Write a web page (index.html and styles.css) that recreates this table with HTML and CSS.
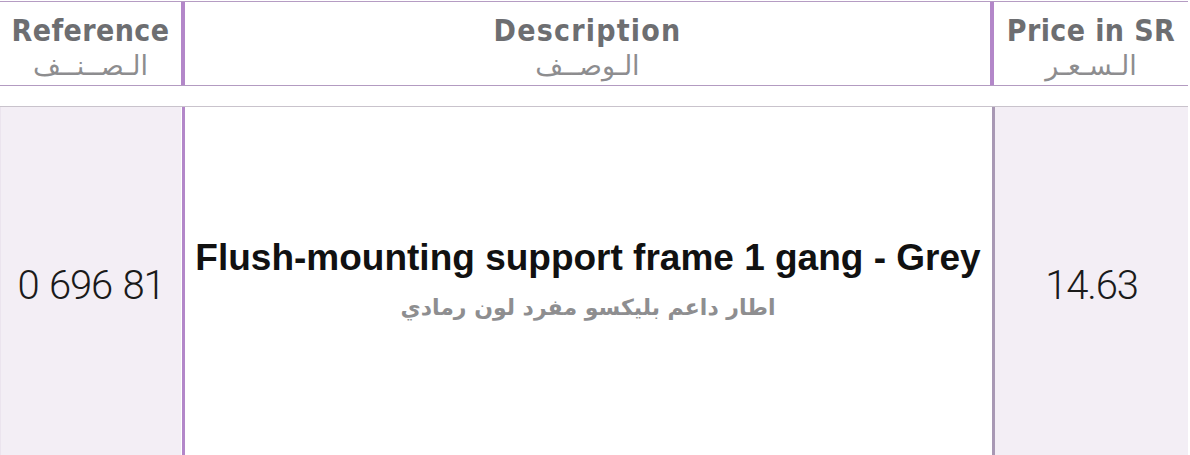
FILE: index.html
```html
<!DOCTYPE html>
<html lang="en">
<head>
<meta charset="utf-8">
<title>Price list</title>
<link rel="stylesheet" href="styles.css">
</head>
<body>
<div class="sheet">
  <div class="row head">
    <div class="cell c1">
      <div class="en">Reference</div>
      <div class="ar" dir="rtl">الـصــنــف</div>
    </div>
    <div class="cell c2">
      <div class="en wide">Description</div>
      <div class="ar" dir="rtl">الـوصــف</div>
    </div>
    <div class="cell c3">
      <div class="en">Price in SR</div>
      <div class="ar" dir="rtl">الـسـعـر</div>
    </div>
  </div>
  <div class="row body">
    <div class="cell c1 shade"><span class="num">0 696 81</span></div>
    <div class="cell c2">
      <div class="title">Flush-mounting support frame 1 gang - Grey</div>
      <div class="artitle" dir="rtl">اطار داعم بليكسو مفرد لون رمادي</div>
    </div>
    <div class="cell c3 shade alt"><span class="num">14.63</span></div>
  </div>
</div>
</body>
</html>
```

FILE: styles.css
```css
html, body {
  margin: 0;
  padding: 0;
  background: #ffffff;
}
.sheet {
  width: 1188px;
  padding-top: 1px;
}
.row {
  display: grid;
  grid-template-columns: 181px 809px 198px;
}
.head {
  border-top: 1px solid #b59cc3;
  border-bottom: 1px solid #b39bc1;
  height: 83px;
}
.cell {
  display: flex;
  flex-direction: column;
  align-items: center;
  justify-content: center;
}
.head .cell {
  justify-content: flex-start;
  padding-top: 11px;
}
.c2 {
  border-left: 4px solid #b387c9;
}
.c3 {
  border-left: 4px solid #b387c9;
}
.en {
  font-family: "DejaVu Sans Condensed", "DejaVu Sans", sans-serif;
  font-stretch: condensed;
  font-weight: bold;
  font-size: 30px;
  line-height: 36px;
  color: #6d6e71;
  letter-spacing: 0.4px;
}
.en.wide {
  letter-spacing: 1.2px;
}
.ar {
  font-family: "DejaVu Sans", sans-serif;
  font-weight: normal;
  font-size: 27px;
  line-height: 30px;
  color: #8d8d8f;
  margin-top: 2px;
}
.body {
  margin-top: 20px;
  border-top: 1px solid #c9c3cc;
  height: 354px;
}
.body .c1 {
  border-left: 1px solid #ebe4ee;
}
.body .c2 {
  border-left: 3px solid #b387c9;
  padding-left: 1px;
  margin-left: 1px;
  justify-content: flex-start;
  padding-top: 130px;
}
.body .c3 {
  border-left: 3px solid #a898b4;
  margin-left: 2px;
}
.shade {
  background: #f3eef5;
}
.num {
  font-family: Roboto, "DejaVu Sans Condensed", sans-serif;
  font-weight: 300;
  font-size: 40px;
  color: #1a1a1a;
  letter-spacing: -1.2px;
  word-spacing: 2px;
  margin-top: 2px;
}
.title {
  font-family: "Liberation Sans", Arial, sans-serif;
  font-weight: bold;
  font-size: 37px;
  line-height: 42px;
  color: #111111;
}
.artitle {
  font-family: "DejaVu Sans", sans-serif;
  font-weight: bold;
  font-size: 22px;
  line-height: 30px;
  color: #8e8e90;
  margin-top: 14px;
}
```
